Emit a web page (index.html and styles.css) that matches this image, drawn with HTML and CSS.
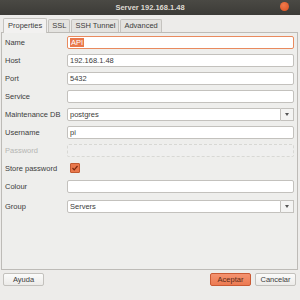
FILE: index.html
```html
<!DOCTYPE html>
<html lang="es">
<head>
  <meta charset="UTF-8" />
  <title>Server 192.168.1.48</title>
  <link rel="stylesheet" href="styles.css">
</head>
<body>
  <div class="titlebar">
    <span class="title">Server 192.168.1.48</span>
    <span class="close"></span>
  </div>
  <div class="dialog">
    <div class="tabs">
      <div class="tab active">Properties</div>
      <div class="tab">SSL</div>
      <div class="tab">SSH Tunnel</div>
      <div class="tab">Advanced</div>
    </div>
    <div class="panel">
      <div class="row">
        <label>Name</label>
        <div class="field focus"><span class="sel">API</span></div>
      </div>
      <div class="row">
        <label>Host</label>
        <div class="field">192.168.1.48</div>
      </div>
      <div class="row">
        <label>Port</label>
        <div class="field">5432</div>
      </div>
      <div class="row">
        <label>Service</label>
        <div class="field"></div>
      </div>
      <div class="row">
        <label>Maintenance DB</label>
        <div class="combo">
          <div class="field">postgres</div>
          <div class="arrow"></div>
        </div>
      </div>
      <div class="row">
        <label>Username</label>
        <div class="field">pi</div>
      </div>
      <div class="row">
        <label class="disabled">Password</label>
        <div class="field off"></div>
      </div>
      <div class="row">
        <label>Store password</label>
        <div class="check">
          <svg width="8" height="8" viewBox="0 0 8 8"><path d="M1.5 4 L3.2 5.8 L6.5 2" fill="none" stroke="#7a2a10" stroke-width="1.2"/></svg>
        </div>
      </div>
      <div class="row">
        <label>Colour</label>
        <div class="field"></div>
      </div>
      <div class="row group">
        <label>Group</label>
        <div class="combo">
          <div class="field">Servers</div>
          <div class="arrow"></div>
        </div>
      </div>
    </div>
    <div class="buttons">
      <button class="btn">Ayuda</button>
      <div class="right">
        <button class="btn primary">Aceptar</button>
        <button class="btn">Cancelar</button>
      </div>
    </div>
  </div>
</body>
</html>
```

FILE: styles.css
```css
html, body {
  margin: 0;
  padding: 0;
  width: 300px;
  height: 300px;
  overflow: hidden;
  font-family: 'Liberation Sans', sans-serif;
  font-size: 7.5px;
  color: #3c3c3c;
  background: #edecea;
}
.titlebar {
  height: 15px;
  background: linear-gradient(to bottom, #4a4944, #3c3b37);
  display: flex;
  align-items: center;
  justify-content: center;
  position: relative;
}
.title {
  color: #dfdbd2;
  font-weight: bold;
  font-size: 7.5px;
}
.close {
  position: absolute;
  right: 11px;
  top: 2px;
  width: 9px;
  height: 9px;
  border-radius: 50%;
  background: radial-gradient(circle at 40% 35%, #f07a4c, #d9501f);
}
.dialog {
  height: 285px;
  display: flex;
  flex-direction: column;
  padding: 0 2px 0 1px;
}
.tabs {
  display: flex;
  padding: 3px 0 0 2px;
  height: 14px;
  align-items: flex-end;
}
.tab {
  height: 12px;
  line-height: 12px;
  padding: 0 3px;
  border: 1px solid #c5c3bf;
  border-bottom: none;
  border-radius: 2px 2px 0 0;
  background: #e4e3e0;
  margin-right: 1px;
  color: #3c3c3c;
}
.tab.active {
  height: 14px;
  line-height: 14px;
  background: #f2f1f0;
  padding: 0 4px;
  position: relative;
  top: 1px;
}
.panel {
  height: 238px;
  border: 1px solid #bdbbb7;
  background: #eeeeec;
  padding: 0 3px;
  box-sizing: border-box;
}
.row {
  display: flex;
  align-items: center;
  height: 18px;
}
.row.group {
  margin-top: 2px;
}
.row label {
  width: 62px;
  flex: none;
  white-space: nowrap;
}
.row label.disabled {
  color: #b5b5b3;
}
.field {
  flex: 1;
  height: 13px;
  line-height: 11px;
  box-sizing: border-box;
  background: #fff;
  border: 1px solid #c3c1bd;
  border-radius: 2px;
  padding: 0 2px;
  color: #3c3c3c;
}
.field.focus {
  border-color: #e98a5e;
}
.field.off {
  background: #efefee;
  border: 1px dashed #d8d8d4;
}
.sel {
  background: #e9784c;
  color: #fff;
  padding: 0 1px;
}
.combo {
  flex: 1;
  display: flex;
}
.combo .field {
  border-radius: 2px 0 0 2px;
}
.arrow {
  width: 13px;
  height: 13px;
  box-sizing: border-box;
  border: 1px solid #c3c1bd;
  border-left: none;
  background: #f4f4f3;
  display: flex;
  align-items: center;
  justify-content: center;
}
.arrow::after {
  content: "";
  border-left: 2px solid transparent;
  border-right: 2px solid transparent;
  border-top: 3px solid #555;
}
.check {
  width: 8px;
  height: 8px;
  margin-left: 3px;
  background: #e9784c;
  border: 1px solid #c25a30;
  border-radius: 1px;
  display: flex;
}
.buttons {
  display: flex;
  justify-content: space-between;
  padding: 3px 2px 0 2px;
}
.right {
  display: flex;
  gap: 4px;
}
.btn {
  height: 13px;
  width: 41px;
  padding: 0;
  font-family: 'Liberation Sans', sans-serif;
  font-size: 7.5px;
  color: #3c3c3c;
  background: linear-gradient(to bottom, #fbfbfa, #ecebe9);
  border: 1px solid #c3c1bd;
  border-radius: 2px;
}
.btn.primary {
  background: linear-gradient(to bottom, #f49370, #ec7a52);
  border-color: #c95a34;
  color: #5a2a18;
}
```
